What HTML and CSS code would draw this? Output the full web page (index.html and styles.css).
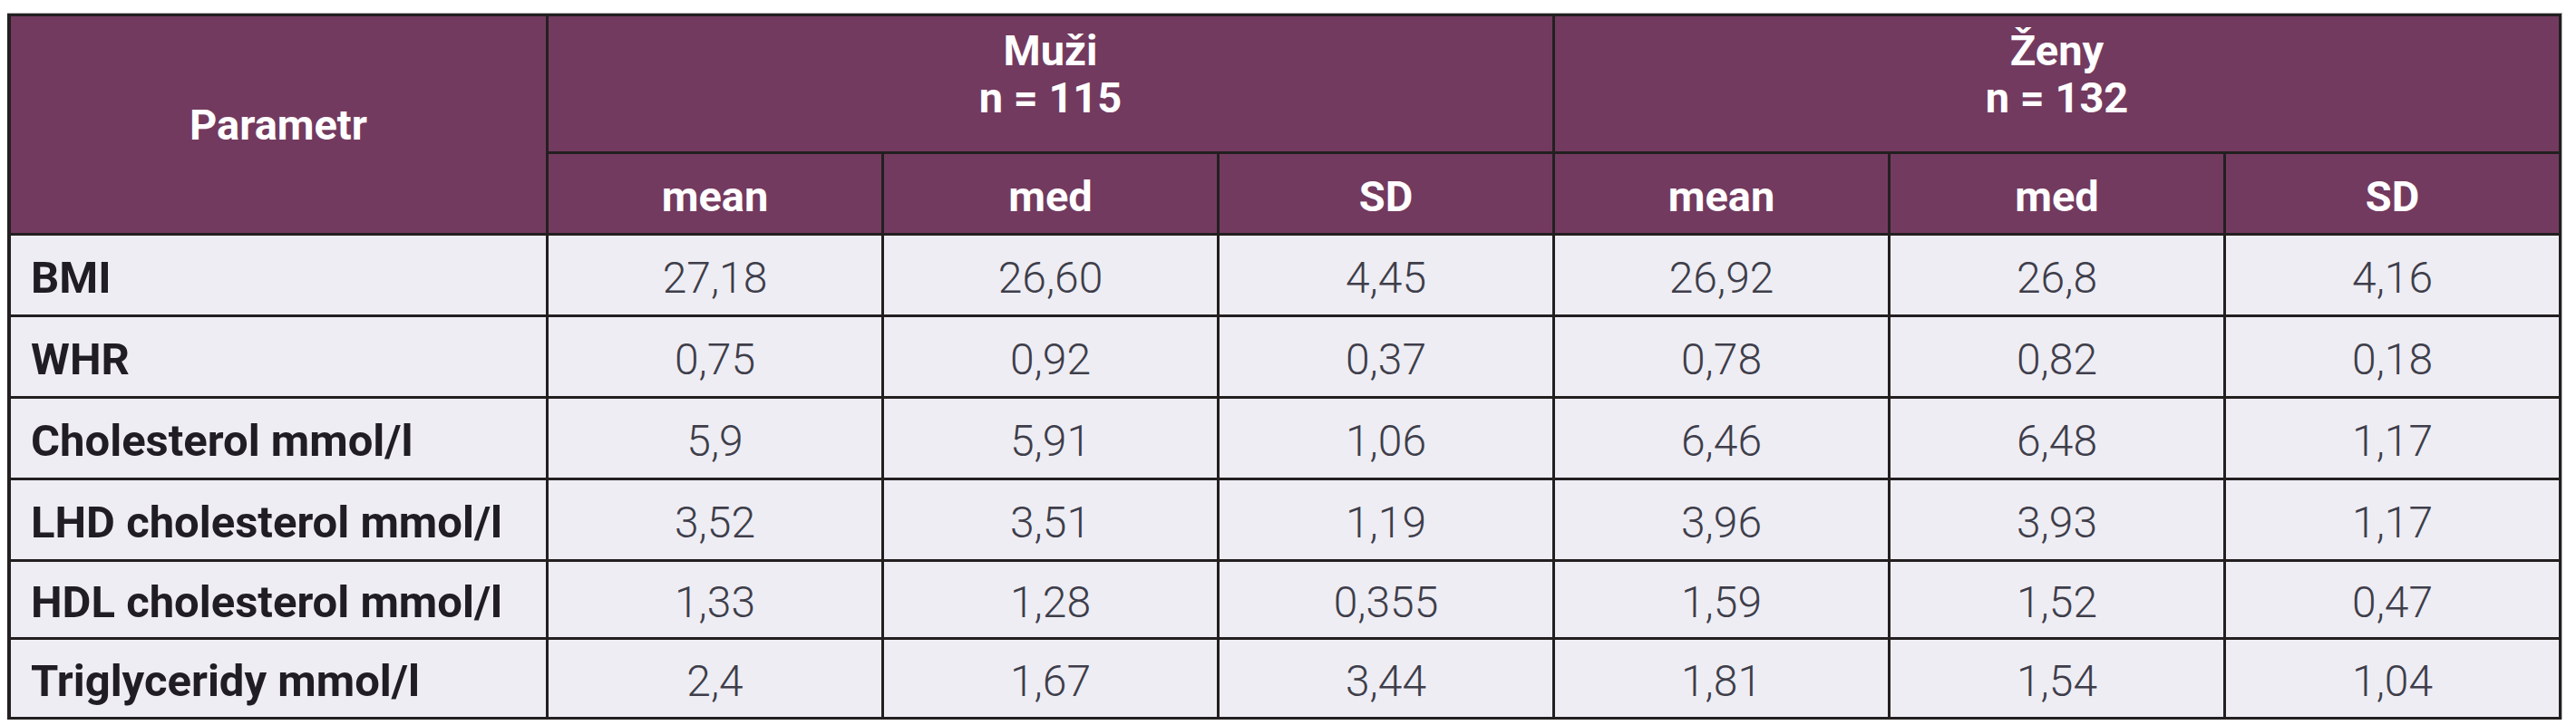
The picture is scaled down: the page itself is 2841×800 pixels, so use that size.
FILE: index.html
```html
<!DOCTYPE html>
<html lang="cs">
<head>
<meta charset="utf-8">
<title>Parametry</title>
<link rel="stylesheet" href="styles.css">
</head>
<body>
<table class="data">
  <colgroup>
    <col class="c-label">
    <col class="c-num"><col class="c-num"><col class="c-num">
    <col class="c-num"><col class="c-num"><col class="c-num">
  </colgroup>
  <thead>
    <tr class="h1">
      <th rowspan="2" class="param">Parametr</th>
      <th colspan="3" class="group">Muži<br>n = 115</th>
      <th colspan="3" class="group">Ženy<br>n = 132</th>
    </tr>
    <tr class="h2">
      <th>mean</th><th>med</th><th>SD</th>
      <th>mean</th><th>med</th><th>SD</th>
    </tr>
  </thead>
  <tbody>
    <tr><td class="label">BMI</td><td>27,18</td><td>26,60</td><td>4,45</td><td>26,92</td><td>26,8</td><td>4,16</td></tr>
    <tr><td class="label">WHR</td><td>0,75</td><td>0,92</td><td>0,37</td><td>0,78</td><td>0,82</td><td>0,18</td></tr>
    <tr><td class="label">Cholesterol mmol/l</td><td>5,9</td><td>5,91</td><td>1,06</td><td>6,46</td><td>6,48</td><td>1,17</td></tr>
    <tr><td class="label">LHD cholesterol mmol/l</td><td>3,52</td><td>3,51</td><td>1,19</td><td>3,96</td><td>3,93</td><td>1,17</td></tr>
    <tr class="short"><td class="label">HDL cholesterol mmol/l</td><td>1,33</td><td>1,28</td><td>0,355</td><td>1,59</td><td>1,52</td><td>0,47</td></tr>
    <tr class="last"><td class="label">Triglyceridy mmol/l</td><td>2,4</td><td>1,67</td><td>3,44</td><td>1,81</td><td>1,54</td><td>1,04</td></tr>
  </tbody>
</table>
</body>
</html>
```

FILE: styles.css
```css
html, body {
  background: #ffffff;
}
body {
  margin: 8px;
  font-family: Roboto, "Liberation Sans", sans-serif;
}
.data {
  margin-top: 7px;
  width: 2817px;
  table-layout: fixed;
  border-collapse: separate;
  border-spacing: 0;
  border-top: 3px solid #231f20;
  border-left: 4px solid #231f20;
  box-shadow: 0 0 0 1px #b8b8bc;
}
.c-label { width: 593px; }
.c-num { width: 370px; }
.data th,
.data td {
  box-sizing: border-box;
  border-right: 3px solid #231f20;
  border-bottom: 3px solid #231f20;
  padding: 0;
  text-align: center;
  vertical-align: middle;
}
.data th {
  background: #733a5f;
  color: #ffffff;
  font-weight: 700;
  font-size: 47px;
}
.h1 th { height: 152px; }
.h1 .group {
  line-height: 52px;
  padding-bottom: 22px;
}
.h2 th {
  height: 90px;
  padding-top: 6px;
}
.param { padding-top: 6px; }
.data td {
  background: #eeedf4;
  height: 90px;
  padding-top: 5px;
  font-size: 48px;
  font-weight: 300;
  color: #3e3e4a;
}
.data tr.short td { height: 86px; }
.data tr.last td { height: 88px; }
.data td.label {
  text-align: left;
  padding-left: 22px;
  font-weight: 700;
  font-size: 49px;
  color: #201d24;
}
```
